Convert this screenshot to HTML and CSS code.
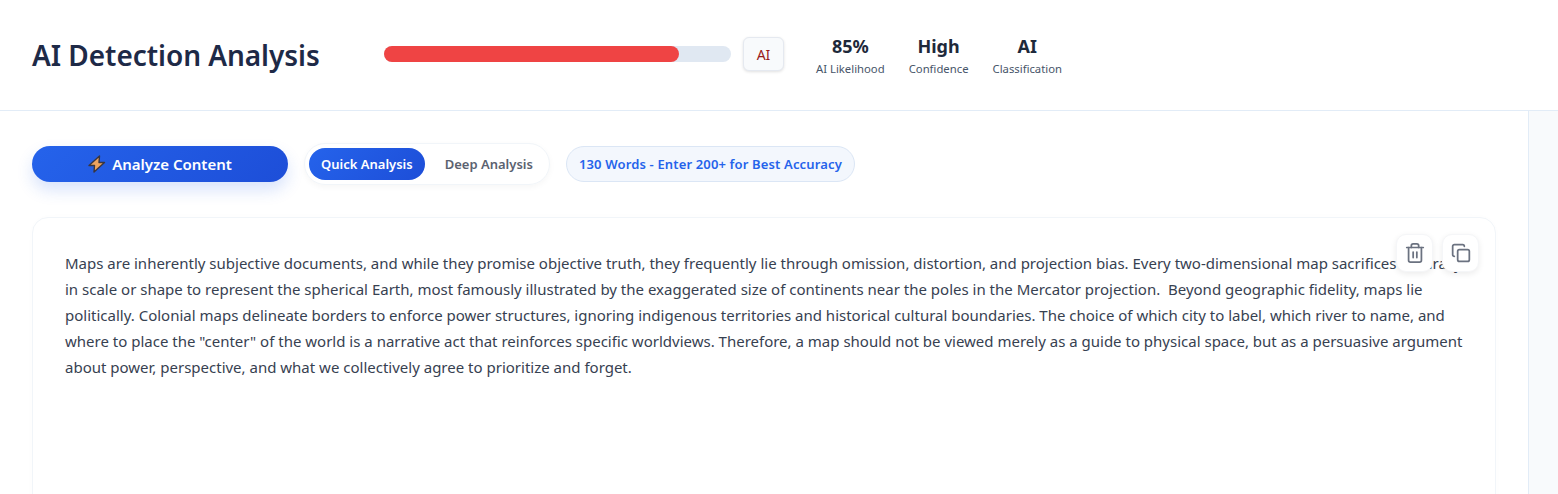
FILE: index.html
```html
<!DOCTYPE html>
<html lang="en">
<head>
<meta charset="utf-8">
<title>AI Detection Analysis</title>
<link rel="stylesheet" href="styles.css">
</head>
<body>
<header class="header">
  <h1 class="title">AI Detection Analysis</h1>
  <div class="meter">
    <div class="track"><div class="fill" style="width:85%"></div></div>
    <span class="verdict">AI</span>
  </div>
  <div class="stats">
    <div class="stat"><strong>85%</strong><span>AI Likelihood</span></div>
    <div class="stat"><strong>High</strong><span>Confidence</span></div>
    <div class="stat"><strong>AI</strong><span>Classification</span></div>
  </div>
</header>
<div class="body">
  <main class="main">
    <div class="toolbar">
      <button class="analyze">
        <svg class="bolt" width="18" height="18" viewBox="0 0 18 18"><path d="M11.5 1 1 10.5h5.5L6 17l10.5-9.5H11z" fill="#eda35f" stroke="#3a3640" stroke-width="1.4" stroke-linejoin="round"/></svg>
        Analyze Content
      </button>
      <div class="modes">
        <span class="mode active">Quick Analysis</span>
        <span class="mode">Deep Analysis</span>
      </div>
      <span class="count">130 Words - Enter 200+ for Best Accuracy</span>
    </div>
    <section class="editor">
      <div class="actions">
        <button class="icon-btn" aria-label="Delete">
          <svg width="22" height="22" viewBox="0 0 24 24" fill="none" stroke="#6b7280" stroke-width="1.9" stroke-linecap="round" stroke-linejoin="round"><path d="M3 6h18"/><path d="M8 6V4a2 2 0 0 1 2-2h4a2 2 0 0 1 2 2v2"/><path d="M5 6v14a2 2 0 0 0 2 2h10a2 2 0 0 0 2-2V6"/><path d="M10 11v6"/><path d="M14 11v6"/></svg>
        </button>
        <button class="icon-btn" aria-label="Copy">
          <svg width="20" height="20" viewBox="0 0 24 24" fill="none" stroke="#6b7280" stroke-width="2.1" stroke-linecap="round" stroke-linejoin="round"><rect x="8" y="8" width="14" height="14" rx="2"/><path d="M4 16a2 2 0 0 1-2-2V4a2 2 0 0 1 2-2h10a2 2 0 0 1 2 2"/></svg>
        </button>
      </div>
      <p class="text">Maps are inherently subjective documents, and while they promise objective truth, they frequently lie through omission, distortion, and projection bias. Every two-dimensional map sacrifices accuracy in scale or shape to represent the spherical Earth, most famously illustrated by the exaggerated size of continents near the poles in the Mercator projection.&nbsp; Beyond geographic fidelity, maps lie politically. Colonial maps delineate borders to enforce power structures, ignoring indigenous territories and historical cultural boundaries. The choice of which city to label, which river to name, and where to place the "center" of the world is a narrative act that reinforces specific worldviews. Therefore, a map should not be viewed merely as a guide to physical space, but as a persuasive argument about power, perspective, and what we collectively agree to prioritize and forget.</p>
    </section>
  </main>
  <aside class="side"></aside>
</div>
</body>
</html>
```
FILE: styles.css
```css
* { box-sizing: border-box; }
html, body { height: 100%; }
body {
  margin: 0;
  height: 494px;
  overflow: hidden;
  background: #fff;
  font-family: "Noto Sans", sans-serif;
  color: #1e293b;
}
.header {
  height: 111px;
  border-bottom: 1px solid #e2ecf7;
  display: flex;
  align-items: flex-start;
  padding: 36px 32px 0;
}
.title {
  margin: 0;
  width: 352px;
  font-size: 28px;
  line-height: 38px;
  font-weight: 600;
  letter-spacing: -.05px;
  color: #1e2a47;
}
.meter {
  display: flex;
  align-items: center;
  gap: 12px;
  margin-top: 1px;
  margin-right: 32px;
}
.track {
  width: 347px;
  height: 16px;
  margin-top: -1px;
  border-radius: 8px;
  background: #e0e8f2;
}
.fill { height: 100%; border-radius: 8px; background: #ef4444; }
.verdict {
  width: 41px;
  height: 34px;
  display: flex;
  align-items: center;
  justify-content: center;
  border: 1px solid #e5e9f0;
  border-radius: 6px;
  background: #f8fafc;
  box-shadow: 0 1px 3px rgba(0, 0, 0, .12);
  color: #991b1b;
  font-size: 14px;
}
.stats { display: flex; gap: 24px; margin-top: -1px; }
.stat { display: flex; flex-direction: column; align-items: center; }
.stat strong { font-size: 18px; line-height: 22px; font-weight: 700; color: #1e293b; }
.stat span { font-size: 11.3px; line-height: 24px; color: #475569; }
.body { display: flex; height: 383px; }
.main { flex: 1; min-width: 0; padding: 32px 32px 0; }
.side { width: 30px; border-left: 1px solid #e2ecf7; background: #f8fafc; }
.toolbar { display: flex; align-items: center; gap: 16px; }
.analyze {
  width: 256px;
  height: 36px;
  border: 0;
  border-radius: 18px;
  background: linear-gradient(135deg, #2563eb, #1d4ed8);
  box-shadow: 0 8px 16px rgba(37, 99, 235, .18);
  color: #fff;
  font: 600 15px "Noto Sans", sans-serif;
  display: flex;
  align-items: center;
  justify-content: center;
  gap: 6px;
}
.modes {
  display: flex;
  align-items: center;
  height: 42px;
  padding: 0 4px;
  border: 1px solid #f1f5f9;
  border-radius: 21px;
  box-shadow: 0 2px 6px rgba(0, 0, 0, .04);
}
.mode {
  height: 32px;
  display: flex;
  align-items: center;
  padding: 0 12px;
  font-size: 13px;
  font-weight: 600;
  color: #5b6270;
  border-radius: 16px;
}
.mode + .mode { padding: 0 12px 0 20px; }
.mode.active { background: linear-gradient(135deg, #2563eb, #1d4ed8); color: #fff; }
.count {
  height: 36px;
  display: flex;
  align-items: center;
  padding: 0 12px;
  border: 1px solid #dbe6f5;
  border-radius: 18px;
  background: #f3f7fd;
  color: #2563eb;
  font-size: 13px;
  font-weight: 600;
  letter-spacing: .15px;
}
.editor {
  position: relative;
  margin-top: 32px;
  height: 300px;
  border: 1px solid #f1f5f9;
  border-radius: 16px;
  padding: 32px;
  box-shadow: 0 0 12px rgba(0, 0, 0, .01);
}
.actions { position: absolute; top: 16px; right: 16px; display: flex; gap: 9px; }
.icon-btn {
  width: 37px;
  height: 38px;
  padding: 0;
  display: flex;
  align-items: center;
  justify-content: center;
  border: 1px solid #f5f6f8;
  border-radius: 10px;
  background: #fff;
  box-shadow: 0 2px 6px rgba(0, 0, 0, .08);
}
.text { margin: 0; font-size: 15px; line-height: 26px; color: #374151; }
```
